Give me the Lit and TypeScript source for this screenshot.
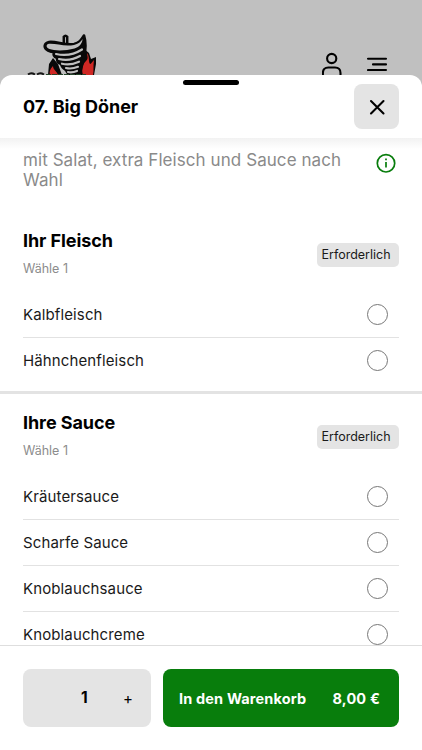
import { LitElement, html, css, svg } from "lit";
import { customElement, property } from "lit/decorators.js";

@customElement("option-group")
class OptionGroup extends LitElement {
  @property() heading = "";
  @property({ type: Array }) options: string[] = [];

  static styles = css`
    :host { display: block; padding: 0 23px; color: #1a1a1a; }
    .head { display: flex; justify-content: space-between; height: 79px; }
    h2 { margin: 16px 0 0; font-size: 18px; line-height: 24px; font-weight: 700; color: #000; letter-spacing: -0.08px; white-space: nowrap; }
    .sub { margin-top: 8px; font-size: 12.5px; line-height: 16px; color: #8c8c8c; letter-spacing: 0; }
    .badge { box-sizing: border-box; width: 82px; height: 24px; margin-top: 30.5px; padding-left: 4.5px; border-radius: 5px; background: #e4e4e4; font-size: 12.5px; line-height: 24px; letter-spacing: 0; white-space: nowrap; }
    .row { box-sizing: border-box; height: 46px; display: flex; align-items: center; justify-content: space-between; border-bottom: 1px solid #e2e2e2; padding-right: 11px; font-size: 15px; letter-spacing: 0.12px; }
    .row:last-child { border-bottom-color: transparent; }
    .radio { box-sizing: border-box; width: 21px; height: 21px; border: 1px solid #777; border-radius: 50%; }
  `;

  render() {
    return html`
      <div class="head">
        <div><h2>${this.heading}</h2><div class="sub">Wähle 1</div></div>
        <div class="badge">Erforderlich</div>
      </div>
      <div>${this.options.map((name) => html`<div class="row"><span>${name}</span><span class="radio"></span></div>`)}</div>
    `;
  }
}

const logo = svg`
  <path d="M21 42l1-11 4-6 5 6 4 11zM50 42l3-22 4-4 5 4 2 6 5-2 0 7-2 11z" fill="#090909"/>
  <path d="M23 42c-1-3 0-6 3-9 0 4 4 5 5 9zM56 42c-2-7 0-11 3-14 3-3 1-5 1-8 3 4 1 8 3 11 1 0 2-2 4-4-1 6 0 10-1 15z" fill="#cf2824"/>
  <path d="M36.800 11V3.800q1.700-2.200 3.400 0V11" fill="#c0c0c0" stroke="#090909" stroke-width="2.500"/>
  <path d="M22 9c-5 1-6 6-1 8.500 2 1 4 1.500 6 1.500-1 3 0 5 3 6 0 4 2 5.500 4 6 1 4 3 5 5 6l3 5h10c3-6 3-12 5-18 2-8 2-15 0-21.500-3 5-5 7.500-10 8.500-9 1.500-18-3-25-2z" fill="#090909" stroke="#090909" stroke-width="2.600" stroke-linejoin="round"/>
  <path d="M21 11c7-1 16 3 26 1 4-1 7-3 8.500-6 0 4-3 8-8 9.500-9 2.500-20 2.500-25 .5-3-1.200-4-3.500-1.500-5z" fill="#c0c0c0"/>
  <path d="M29 21c9 2 19 0 26-4.500M32 26c7 1.700 15 .3 21-3M35 30.700c5 1.300 12 .3 17-2M39 35c4 1 8 .4 12-1.200M41 39c3 .6 6 .2 9-1" fill="none" stroke="#c0c0c0" stroke-width="2.200" stroke-linecap="round"/>
  <path d="M1 41.500q3-2.500 7 0M10 41.500q3-2.500 7 0" fill="none" stroke="#151515" stroke-width="2"/>
  <path d="M19 41.500h40" stroke="#234329" stroke-width="1" stroke-dasharray="5 1"/>
`;

@customElement("app-root")
class AppRoot extends LitElement {
  static styles = css`
    :host { display: flex; flex-direction: column; height: 750px; width: 422px; overflow: hidden; background: #c0c0c0; font-family: Inter, "Liberation Sans", sans-serif; color: #000; }
    .top { box-sizing: border-box; flex: none; height: 75px; display: flex; padding: 33px 33px 0 27px; overflow: hidden; }
    .logo { flex: none; width: 74px; height: 42px; }
    .tools { margin-left: auto; display: flex; gap: 23px; padding-top: 19px; }
    .tools svg { width: 22px; height: 26px; }
    .line { fill: none; stroke: #000; stroke-width: 2.1; stroke-linecap: round; stroke-linejoin: round; }
    .sheet { flex: 1; min-height: 0; display: flex; flex-direction: column; position: relative; background: #fff; border-radius: 12px 12px 0 0; }
    .grip { position: absolute; left: 183px; top: 4.500px; width: 56px; height: 5.500px; border-radius: 3px; background: #000; }
    header { box-sizing: border-box; flex: none; height: 63px; display: flex; align-items: center; justify-content: space-between; padding: 0 23px; }
    h1 { margin: 1px 0 0; font-size: 18px; line-height: 24px; font-weight: 700; letter-spacing: -0.02px; }
    button { font: inherit; border: 0; padding: 0; color: inherit; }
    .close { width: 45px; height: 45px; border-radius: 8px; background: #e4e4e4; display: grid; place-items: center; }
    .close svg { width: 18px; height: 18px; }
    .content { flex: 1; min-height: 0; overflow: hidden; background: linear-gradient(#f2f2f2, #fff 11px); }
    .intro { box-sizing: border-box; height: 74.500px; padding: 12px 25px 0 23px; display: flex; justify-content: space-between; color: #8a8a8a; }
    .intro p { margin: 0; width: 330px; font-size: 17px; line-height: 20px; letter-spacing: 0.07px; }
    .intro svg { width: 22px; height: 22px; margin-top: 2px; }
    .divider { height: 3px; margin: 7.500px 0 0.500px; background: #e3e3e3; }
    footer { box-sizing: border-box; flex: none; height: 105px; border-top: 1px solid #dedede; padding: 23px 23px; display: flex; gap: 12px; background: #fff; }
    .quantity, .cart { height: 58px; border-radius: 8px; display: flex; align-items: center; }
    .quantity { width: 128px; background: #e4e4e4; }
    .count { margin: -2px 0 0 58px; width: 10px; font-size: 15.500px; font-weight: 700; }
    .plus { background: none; margin-left: 32px; width: 10px; font-size: 15px; }
    .cart { flex: 1; justify-content: space-between; padding: 0 19px 0 16px; background: #087d0c; color: #fff; font-size: 14.500px; font-weight: 700; letter-spacing: 0.160px; white-space: nowrap; }
  `;

  render() {
    return html`
      <div class="top">
        <svg class="logo" viewBox="0 0 74 42">${logo}</svg>
        <div class="tools">
          <svg viewBox="0 0 22 26"><circle class="line" cx="9.700" cy="6.500" r="4.600"/><path class="line" d="M.9 25v-4q0-5.500 5.500-5.500h6.600q5.500 0 5.500 5.500v4"/></svg>
          <svg viewBox="0 0 22 26"><path class="line" d="M1 6.700h18M6 12.400h13M1 18h18"/></svg>
        </div>
      </div>
      <div class="sheet">
        <div class="grip"></div>
        <header>
          <h1>07. Big Döner</h1>
          <button class="close" aria-label="Schließen"><svg viewBox="0 0 18 18"><path class="line" d="M3 3l12.500 12.500M15.500 3L3 15.500"/></svg></button>
        </header>
        <div class="content">
          <div class="intro">
            <p>mit Salat, extra Fleisch und Sauce nach Wahl</p>
            <svg viewBox="0 0 22 22"><circle cx="11" cy="11.300" r="8.700" fill="none" stroke="#087d0c" stroke-width="1.700"/><path d="M11 10v5.500M11 6.500v1.700" stroke="#087d0c" stroke-width="1.700"/></svg>
          </div>
          <option-group heading="Ihr Fleisch" .options=${["Kalbfleisch", "Hähnchenfleisch"]}></option-group>
          <div class="divider"></div>
          <option-group heading="Ihre Sauce" .options=${["Kräutersauce", "Scharfe Sauce", "Knoblauchsauce", "Knoblauchcreme"]}></option-group>
        </div>
        <footer>
          <div class="quantity"><span class="count">1</span><button class="plus">+</button></div>
          <button class="cart"><span>In den Warenkorb</span><span>8,00 €</span></button>
        </footer>
      </div>
    `;
  }
}
